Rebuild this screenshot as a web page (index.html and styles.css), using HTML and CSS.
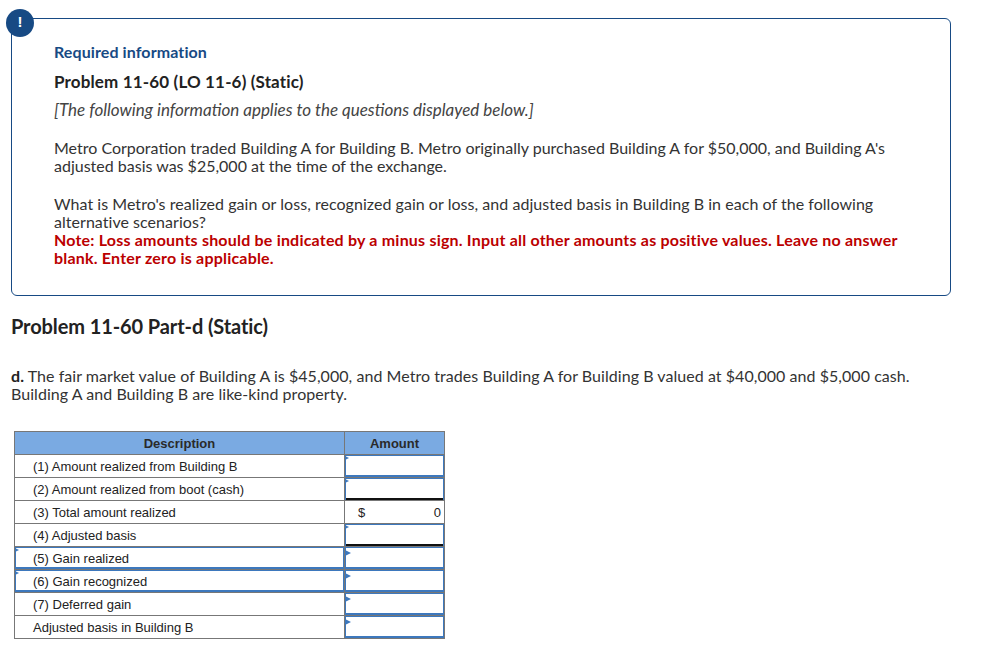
FILE: index.html
```
<!DOCTYPE html>
<html lang="en">
<head>
<meta charset="utf-8">
<title>Problem 11-60</title>
<link rel="stylesheet" href="styles.css">
</head>
<body>
<div class="page">
  <section class="info">
    <span class="badge">!</span>
    <h2 class="req">Required information</h2>
    <h3 class="prob">Problem 11-60 (LO 11-6) (Static)</h3>
    <p class="lead">[The following information applies to the questions displayed below.]</p>
    <p class="para first">Metro Corporation traded Building A for Building B. Metro originally purchased Building A for $50,000, and Building A's adjusted basis was $25,000 at the time of the exchange.</p>
    <p class="para second">What is Metro's realized gain or loss, recognized gain or loss, and adjusted basis in Building B in each of the following alternative scenarios?<br><strong class="note">Note: Loss amounts should be indicated by a minus sign. Input all other amounts as positive values. Leave no answer blank. Enter zero is applicable.</strong></p>
  </section>
  <h3 class="part">Problem 11-60 Part-d (Static)</h3>
  <p class="scenario"><strong>d.</strong> The fair market value of Building A is $45,000, and Metro trades Building A for Building B valued at $40,000 and $5,000 cash. Building A and Building B are like-kind property.</p>
  <table class="grid">
    <thead>
      <tr><th class="desc">Description</th><th class="amt">Amount</th></tr>
    </thead>
    <tbody>
      <tr><td class="desc">(1) Amount realized from Building B</td><td class="amt input"></td></tr>
      <tr><td class="desc">(2) Amount realized from boot (cash)</td><td class="amt input dark-bottom"></td></tr>
      <tr><td class="desc">(3) Total amount realized</td><td class="amt total"><span class="cur">$</span><span class="val">0</span></td></tr>
      <tr><td class="desc">(4) Adjusted basis</td><td class="amt input dark-bottom"></td></tr>
      <tr><td class="desc input">(5) Gain realized</td><td class="amt input large"></td></tr>
      <tr><td class="desc input">(6) Gain recognized</td><td class="amt input large"></td></tr>
      <tr><td class="desc">(7) Deferred gain</td><td class="amt input large"></td></tr>
      <tr><td class="desc">Adjusted basis in Building B</td><td class="amt input large"></td></tr>
    </tbody>
  </table>
</div>
</body>
</html>
```
FILE: styles.css
```
html, body { margin: 0; padding: 0; background: #fff; }
body { font-family: "Lato", "Open Sans", sans-serif; color: #333; font-size: 16px; }
.page { padding: 18px 0 0 11px; width: 940px; }
.info {
  position: relative;
  box-sizing: border-box;
  width: 940px;
  height: 278px;
  border: 1px solid #174a84;
  border-radius: 6px;
  padding: 23px 42px 0 42px;
}
.badge {
  position: absolute;
  left: -6px;
  top: -10px;
  width: 28px;
  height: 28px;
  border-radius: 50%;
  background: #174a84;
  color: #fff;
  font: bold 15px/26px "Liberation Sans", sans-serif;
  text-align: center;
}
.req, .prob, .part { margin: 0; font-weight: 700; }
.req { font-size: 16px; letter-spacing: .1px; line-height: 20px; color: #174a84; }
.prob { font-size: 17px; letter-spacing: .15px; line-height: 20px; color: #222; margin-top: 10px; }
.lead { margin: 8px 0 0; font-size: 17px; line-height: 20px; font-style: italic; color: #444; }
.para { margin: 0; font-size: 16px; line-height: 18px; color: #333; }
.first { margin-top: 19px; }
.second { margin-top: 20px; letter-spacing: .04px; }
.note { color: #b00; font-weight: 700; font-size: 16px; letter-spacing: .2px; }
.part { font-size: 20px; letter-spacing: -.1px; line-height: 22px; color: #222; margin-top: 19px; }
.scenario { margin: 30px 0 0; font-size: 16px; letter-spacing: .05px; line-height: 18px; color: #333; width: 925px; }
.scenario strong { color: #222; }
.grid {
  margin: 28px 0 0 3px;
  border-collapse: collapse;
  table-layout: fixed;
  width: 431px;
  font: 13px/16px "Liberation Sans", sans-serif;
  color: #222;
}
.grid th, .grid td {
  height: 21px;
  padding: 1px 0 0;
  border: 1px solid #777;
  box-sizing: content-box;
}
.grid th { background: #7aaae2; font-size: 13px; font-weight: 700; text-align: center; color: #2a2a2a; }
.grid th.desc { width: 329px; }
.grid td.desc { padding-left: 18px; position: relative; }
.input { position: relative; box-shadow: inset 0 1px 0 #3d78bd, inset 1px 0 0 #3d78bd, inset -1px 0 0 #3d78bd, inset 0 -2px 0 #3d78bd; }
.input::before {
  content: "";
  position: absolute;
  left: 0;
  top: 1px;
  width: 0;
  height: 0;
  border-left: 4px solid #3d78bd;
  border-top: 2px solid transparent;
  border-bottom: 2px solid transparent;
}
.large::before {
  top: 3px;
  border-left-width: 6px;
  border-top-width: 3px;
  border-bottom-width: 3px;
}
.dark-bottom { box-shadow: inset 0 1px 0 #3d78bd, inset 1px 0 0 #3d78bd, inset -1px 0 0 #3d78bd, inset 0 -2px 0 #111; }
.grid td.total { padding: 1px 3px 0 13px; }
.total { white-space: nowrap; }
.val { float: right; }
.cur { float: left; }
```
